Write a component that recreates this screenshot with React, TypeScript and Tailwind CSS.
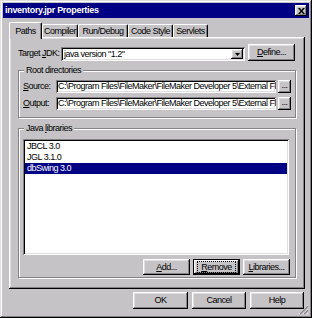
const raised =
  "shadow-[inset_-1px_-1px_0_#000,inset_1px_1px_0_#fff,inset_-2px_-2px_0_#848284,inset_2px_2px_0_#dfdfdf]";
const sunken =
  "shadow-[inset_1px_1px_0_#848284,inset_-1px_-1px_0_#fff,inset_2px_2px_0_#000,inset_-2px_-2px_0_#dfdfdf]";
const focused =
  "shadow-[inset_0_0_0_1px_#000,inset_-2px_-2px_0_#000,inset_2px_2px_0_#fff,inset_-3px_-3px_0_#848284,inset_3px_3px_0_#dfdfdf]";
const etched =
  "border border-[#848284] shadow-[inset_1px_1px_0_#fff,1px_1px_0_#fff]";

function Button({
  children,
  className = "",
  focus = false,
}: {
  children: React.ReactNode;
  className?: string;
  focus?: boolean;
}) {
  return (
    <div
      className={`flex items-center justify-center bg-[#c6c3c6] ${
        focus ? focused : raised
      } ${className}`}
    >
      {focus ? (
        <span className="mx-[4px] my-[2px] flex flex-1 items-center justify-center self-stretch border border-dotted border-black">
          {children}
        </span>
      ) : (
        children
      )}
    </div>
  );
}

function Field({ value, width }: { value: string; width: string }) {
  return (
    <div
      className={`h-[13px] ${width} bg-white ${sunken} flex items-center overflow-hidden whitespace-nowrap pl-[2px]`}
    >
      <span className="overflow-hidden">{value}</span>
    </div>
  );
}

export default function App() {
  const tabs = ["Compiler", "Run/Debug", "Code Style", "Servlets"];
  const tabWidths = ["w-[36px]", "w-[50px]", "w-[45px]", "w-[35px]"];
  const path = "C:\\Program Files\\FileMaker\\FileMaker Developer 5\\External Fl";
  const libs = ["JBCL 3.0", "JGL 3.1.0", "dbSwing 3.0"];

  return (
    <div className="relative flex h-[318px] w-[312px] flex-col bg-[#c6c3c6] p-[3px] font-['Liberation_Sans',Arial,sans-serif] text-[9px] leading-none tracking-[-0.5px] text-black shadow-[inset_-1px_-1px_0_#000,inset_1px_1px_0_#dfdfdf,inset_-2px_-2px_0_#848284,inset_2px_2px_0_#fff]">
      {/* title bar */}
      <div className="flex h-[15px] items-center justify-between bg-[#000084] pl-[2px] pr-[2px]">
        <span className="text-[9px] font-bold tracking-[-0.3px] text-white">inventory.jpr Properties</span>
        <div className={`flex h-[11px] w-[12px] items-center justify-center bg-[#c6c3c6] ${raised}`}>
          <svg width="7" height="6" viewBox="0 0 7 6">
            <path d="M0 0h2l1.5 2L5 0h2L4.5 3 7 6H5L3.5 4 2 6H0l2.5-3z" fill="#000" />
          </svg>
        </div>
      </div>

      {/* tabs */}
      <div className="mt-[4px] flex h-[15px] items-end pl-[6px]">
        <div className="relative z-10 -mb-[2px] flex h-[17px] w-[33px] items-start justify-center rounded-t-[2px] border-l border-t border-r border-l-white border-t-white border-r-black bg-[#c6c3c6] pt-[4px] shadow-[inset_-1px_0_0_#848284]">
          Paths
        </div>
        {tabs.map((t, i) => (
          <div
            key={t}
            className={`flex h-[13px] ${tabWidths[i]} items-center justify-center rounded-t-[2px] border-l border-t border-r border-l-white border-t-white border-r-black pt-[1px] shadow-[inset_-1px_0_0_#848284]`}
          >
            {t}
          </div>
        ))}
      </div>

      {/* panel */}
      <div className={`ml-[6px] flex h-[252px] w-[296px] flex-col pl-[9px] pt-[7px] ${raised}`}>
        <div className="flex h-[17px] items-end">
          <span className="w-[43px] self-center pt-[2px]">
            Target <u>J</u>DK:
          </span>
          <div className={`flex h-[14px] w-[184px] items-center justify-between bg-white pl-[3px] pr-[2px] ${sunken}`}>
            <span>java version "1.2"</span>
            <div className={`flex h-[10px] w-[12px] items-center justify-center bg-[#c6c3c6] ${raised}`}>
              <svg width="5" height="3" viewBox="0 0 5 3">
                <path d="M0 0h5L2.5 3z" fill="#000" />
              </svg>
            </div>
          </div>
          <Button className="ml-[3px] h-[17px] w-[47px]">
            <span>
              <u>D</u>efine...
            </span>
          </Button>
        </div>

        {/* root directories */}
        <div className={`relative mt-[9px] flex h-[48px] w-[278px] flex-col gap-[4px] pl-[4px] pt-[9px] ${etched}`}>
          <span className="absolute -top-[5px] left-[5px] bg-[#c6c3c6] px-[2px]">Root directories</span>
          <div className="flex items-center">
            <span className="w-[33px]">
              <u>S</u>ource:
            </span>
            <Field value={path} width="w-[220px]" />
            <Button className="ml-[2px] h-[13px] w-[13px] items-end pb-[3px]">...</Button>
          </div>
          <div className="flex items-center">
            <span className="w-[33px]">
              <u>O</u>utput:
            </span>
            <Field value={path} width="w-[220px]" />
            <Button className="ml-[2px] h-[13px] w-[13px] items-end pb-[3px]">...</Button>
          </div>
        </div>

        {/* java libraries */}
        <div className={`relative mt-[10px] flex h-[150px] w-[278px] flex-col pl-[4px] pt-[10px] ${etched}`}>
          <span className="absolute -top-[5px] left-[5px] bg-[#c6c3c6] px-[2px]">
            Java <u>l</u>ibraries
          </span>
          <div className={`flex h-[116px] w-[266px] flex-col bg-white p-[2px] ${sunken}`}>
            {libs.map((l, i) => (
              <div
                key={l}
                className={`flex h-[11px] items-center pl-[2px] ${
                  i === 2 ? "bg-[#000084] text-white" : ""
                }`}
              >
                {l}
              </div>
            ))}
          </div>
          <div className="mt-[4px] flex justify-end gap-[3px] pr-[5px]">
            <Button className="h-[16px] w-[47px]">
              <span>
                <u>A</u>dd...
              </span>
            </Button>
            <Button className="h-[16px] w-[47px]" focus>
              <span>
                <u>R</u>emove
              </span>
            </Button>
            <Button className="h-[16px] w-[47px]">
              <span>
                <u>L</u>ibraries...
              </span>
            </Button>
          </div>
        </div>
      </div>

      {/* dialog buttons */}
      <div className="mt-[3px] flex justify-end gap-[4px] pr-[5px]">
        <Button className="h-[17px] w-[55px]">OK</Button>
        <Button className="h-[17px] w-[54px]">Cancel</Button>
        <Button className="h-[17px] w-[54px]">Help</Button>
      </div>

      {/* size grip */}
      <svg className="absolute bottom-[3px] right-[3px]" width="11" height="11" viewBox="0 0 11 11">
        <path d="M10 1L1 10M10 5L5 10M10 9L9 10" stroke="#fff" strokeWidth="1" />
        <path d="M10 2L2 10M10 6L6 10" stroke="#848284" strokeWidth="1.4" />
      </svg>
    </div>
  );
}
